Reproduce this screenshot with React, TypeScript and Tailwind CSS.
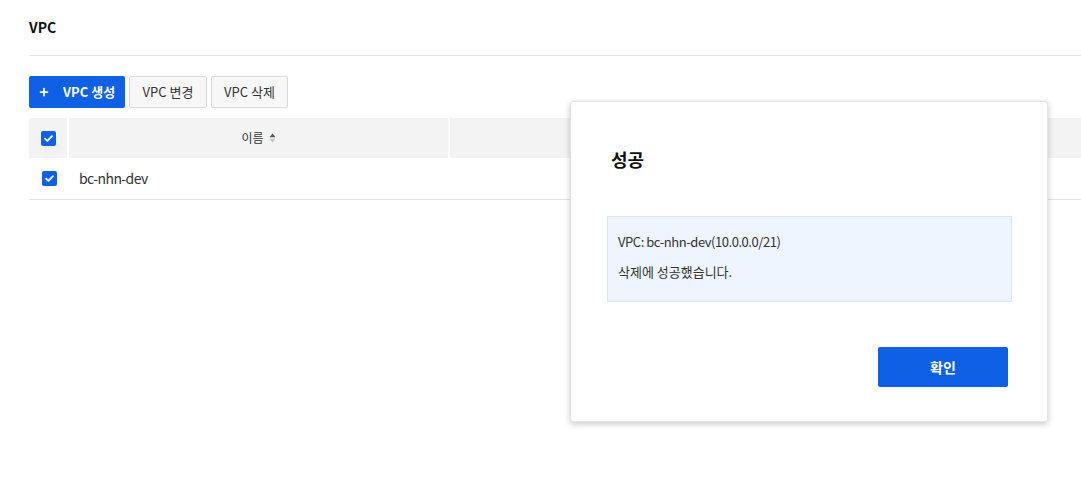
import { Plus } from 'lucide-react';

function Check() {
  return (
    <span className="w-[15px] h-[15px] rounded-[2px] bg-[#1060e5] flex items-center justify-center">
      <svg width="11" height="11" viewBox="0 0 12 12" fill="none">
        <path d="M2.2 6.2 L4.8 8.6 L9.8 3.4" stroke="white" strokeWidth="2" strokeLinecap="round" strokeLinejoin="round" />
      </svg>
    </span>
  );
}

function SortIcon() {
  return (
    <svg width="7" height="10" viewBox="0 0 7 10" className="ml-[5px]">
      <path d="M3.5 0.5 L6.5 4.3 L0.5 4.3 Z" fill="#555" />
      <path d="M3.5 9.5 L6.5 5.7 L0.5 5.7 Z" fill="#c4c4c4" />
    </svg>
  );
}

export default function App() {
  return (
    <div className="relative w-[1081px] h-[493px] bg-white overflow-hidden font-['Noto_Sans_CJK_KR','Noto_Sans',sans-serif] text-[#222]">
      <div className="pl-[29px]">
        {/* Title */}
        <div className="h-[56px] flex items-center border-b border-[#e6e6e6]">
          <h1 className="text-[14px] font-bold text-[#111]">VPC</h1>
        </div>

        {/* Toolbar */}
        <div className="flex gap-[4px] mt-[20px]">
          <button className="h-[32px] w-[96px] rounded-[2px] bg-[#1060e5] text-white text-[13px] font-bold flex items-center pl-[9px] gap-[13px]">
            <Plus className="w-[12px] h-[12px]" strokeWidth={3.5} />
            VPC 생성
          </button>
          <button className="h-[32px] w-[78px] rounded-[2px] bg-[#f7f7f7] border border-[#d9d9d9] text-[13px] text-[#333]">VPC 변경</button>
          <button className="h-[32px] w-[77px] rounded-[2px] bg-[#f7f7f7] border border-[#d9d9d9] text-[13px] text-[#333]">VPC 삭제</button>
        </div>

        {/* Table */}
        <div className="mt-[10px]">
          <div className="flex h-[40px] bg-[#f3f3f3]">
            <div className="w-[40px] flex items-center justify-center border-r-2 border-white">
              <Check />
            </div>
            <div className="w-[381px] flex items-center justify-center border-r-2 border-white text-[12px] text-[#333]">
              이름
              <SortIcon />
            </div>
            <div className="flex-1" />
          </div>
          <div className="flex h-[42px] items-center border-b border-[#e2e2e2]">
            <div className="w-[40px] flex items-center justify-center">
              <Check />
            </div>
            <div className="pl-[10px] text-[14px] text-[#333] tracking-[-0.6px]">bc-nhn-dev</div>
          </div>
        </div>
      </div>

      {/* Modal */}
      <div className="absolute left-[570px] top-[101px] w-[478px] h-[321px] bg-white rounded-[3px] border border-[#e4e4e4] shadow-[0_2px_6px_rgba(0,0,0,0.22)] pl-[36px] pr-[35px] pt-[44px]">
        <h2 className="text-[18px] font-bold text-[#111] pl-[4px]">성공</h2>
        <div className="mt-[43px] h-[86px] bg-[#eef5fe] border border-[#d8e5f8] px-[10px] pt-[15px] text-[13px] text-[#333]">
          <p className="tracking-[-0.45px]">VPC: bc-nhn-dev(10.0.0.0/21)</p>
          <p className="mt-[10px]">삭제에 성공했습니다.</p>
        </div>
        <div className="flex justify-end mt-[45px] pr-[4px]">
          <button className="w-[130px] h-[40px] rounded-[2px] bg-[#1060e5] text-white text-[14px] font-bold">확인</button>
        </div>
      </div>
    </div>
  );
}
